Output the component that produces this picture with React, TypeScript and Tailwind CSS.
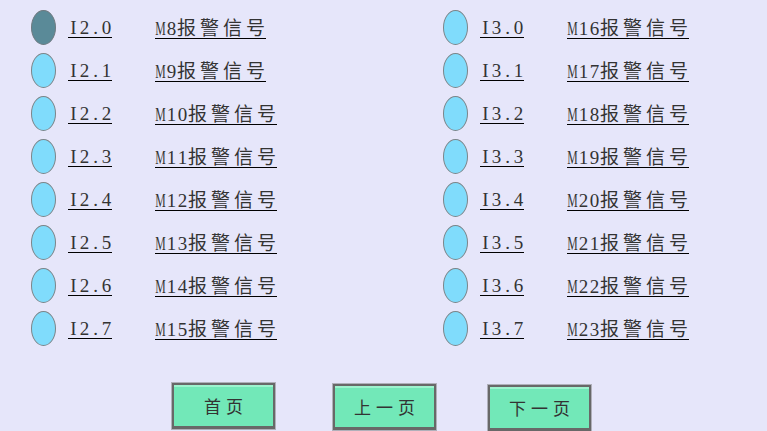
import React from "react";

const latinFont = { fontFamily: '"Liberation Serif", "Times New Roman", serif' };

function LatinCell({ c }: { c: string }) {
  if (c === "M") {
    return (
      <span className="inline-block w-[11px] text-center">
        <span className="inline-block -mx-[3px] scale-x-[0.62]">M</span>
      </span>
    );
  }
  return <span className="inline-block w-[11px] text-center">{c}</span>;
}

function Label({ text }: { text: string }) {
  const chars = Array.from(text);
  const latin = chars.filter((c) => /[A-Za-z0-9.]/.test(c));
  const cjk = chars.filter((c) => !/[A-Za-z0-9.]/.test(c));
  return (
    <div className="flex items-baseline border-b border-black leading-none text-[#333]">
      <span className="flex items-baseline text-[19px]" style={latinFont}>
        {latin.map((c, i) => (
          <LatinCell key={i} c={c} />
        ))}
      </span>
      {cjk.length > 0 && (
        <span className="flex items-baseline text-[19px] font-['Noto_Sans_CJK_SC',sans-serif]">
          {cjk.map((c, i) => (
            <span
              key={i}
              className={i < cjk.length - 1 ? "inline-block w-[23px]" : "inline-block w-[20px]"}
            >
              {c}
            </span>
          ))}
        </span>
      )}
    </div>
  );
}

function Row({ io, name, on }: { io: string; name: string; on?: boolean }) {
  return (
    <div className="flex h-[43px] items-center">
      <div
        className={
          on
            ? "h-[35px] w-[25px] shrink-0 rounded-[50%] border-[1.5px] border-[#6f7a80] bg-[#5a8a98]"
            : "h-[35px] w-[25px] shrink-0 rounded-[50%] border-[1.5px] border-[#7c8488] bg-[#80dcfc]"
        }
      />
      <div className="ml-[12px] w-[44px]">
        <Label text={io} />
      </div>
      <div className="ml-[43px]">
        <Label text={name} />
      </div>
    </div>
  );
}

function Btn({ label, className }: { label: string; className: string }) {
  return (
    <div className={"border border-[#b0b0ba] " + className}>
      <div className="flex h-[46px] w-[103px] items-center justify-center border-2 border-b-[3px] border-[#686868] bg-[#72e8b8] pl-[5px] text-[17px] tracking-[5px] text-[#333] shadow-[inset_0_2px_0_#9ef3cf] font-['Noto_Sans_CJK_SC',sans-serif]">
        {label}
      </div>
    </div>
  );
}

export default function App() {
  const left = Array.from({ length: 8 }, (_, i) => ({
    io: `I2.${i}`,
    name: `M${8 + i}报警信号`,
  }));
  const right = Array.from({ length: 8 }, (_, i) => ({
    io: `I3.${i}`,
    name: `M${16 + i}报警信号`,
  }));
  return (
    <div className="h-[431px] w-[767px] overflow-hidden bg-[#e6e6fa]">
      <div className="flex pt-[6px]">
        <div className="w-[443px] pl-[31px]">
          {left.map((r, i) => (
            <Row key={r.io} io={r.io} name={r.name} on={i === 0} />
          ))}
        </div>
        <div>
          {right.map((r) => (
            <Row key={r.io} io={r.io} name={r.name} />
          ))}
        </div>
      </div>
      <div className="mt-[32px] flex items-start pl-[171px]">
        <Btn label="首页" className="" />
        <Btn label="上一页" className="ml-[56px] mt-[1px]" />
        <Btn label="下一页" className="ml-[50px] mt-[2px]" />
      </div>
    </div>
  );
}
